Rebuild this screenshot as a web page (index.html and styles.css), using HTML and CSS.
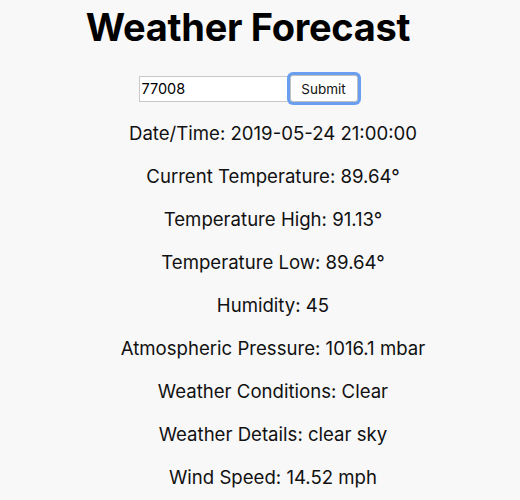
FILE: index.html
```html
<!DOCTYPE html>
<html>
<head>
<meta charset="utf-8">
<link rel="stylesheet" href="styles.css">
</head>
<body>
<div class="app">
  <h1 class="title">Weather Forecast</h1>
  <form class="zip-form">
    <input class="zip-input" type="text" value="77008">
    <button class="zip-submit" type="button">Submit</button>
  </form>
  <div class="details">
    <p class="row">Date/Time: 2019-05-24 21:00:00</p>
    <p class="row">Current Temperature: 89.64°</p>
    <p class="row">Temperature High: 91.13°</p>
    <p class="row">Temperature Low: 89.64°</p>
    <p class="row">Humidity: 45</p>
    <p class="row">Atmospheric Pressure: 1016.1 mbar</p>
    <p class="row">Weather Conditions: Clear</p>
    <p class="row">Weather Details: clear sky</p>
    <p class="row">Wind Speed: 14.52 mph</p>
  </div>
</div>
</body>
</html>
```
FILE: styles.css
```css
html, body {
  margin: 0;
  padding: 0;
  background: #f8f8f8;
}
body {
  font-family: Inter, "Noto Sans", sans-serif;
  color: #111;
}
.app {
  display: flex;
  flex-direction: column;
  align-items: center;
  padding-right: 24px;
}
.title {
  font-size: 38px;
  font-weight: 700;
  line-height: 48px;
  margin: 3px 0 0 0;
  color: #000;
  letter-spacing: -0.3px;
}
.zip-form {
  display: flex;
  align-items: center;
  margin-top: 24px;
}
.zip-input {
  box-sizing: border-box;
  width: 151px;
  height: 26px;
  border: 1px solid #c8c8c8;
  background: #fff;
  font-family: Inter, sans-serif;
  font-size: 14.5px;
  padding: 0 2px;
  margin: 0;
  color: #000;
}
.zip-submit {
  box-sizing: border-box;
  height: 27px;
  width: 68px;
  margin: 0;
  border: 1px solid #c0c0c0;
  border-radius: 3px;
  background: #fff;
  font-family: Inter, sans-serif;
  font-size: 13.5px;
  color: #111;
  box-shadow: 0 0 0 3px #6a9ef0;
}
.details {
  display: flex;
  flex-direction: column;
  align-items: center;
  padding-left: 50px;
  margin-top: 12px;
}
.row {
  font-size: 18.6px;
  line-height: 24px;
  margin: 7px 0 12px 0;
}
```
